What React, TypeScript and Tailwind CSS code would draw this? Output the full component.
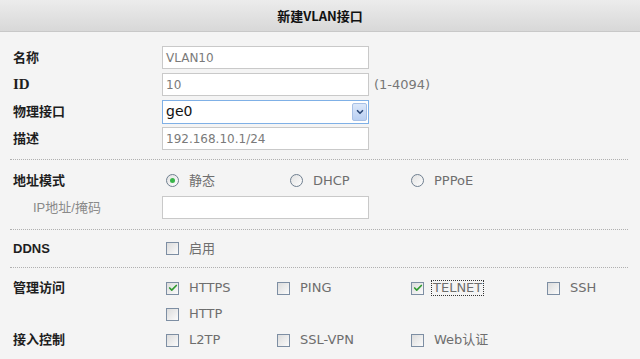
import { Check, ChevronDown } from 'lucide-react';

const font = { fontFamily: '"DejaVu Sans", "Noto Sans CJK SC", sans-serif' };

function Label({ children, sub, serif }: { children: React.ReactNode; sub?: boolean; serif?: boolean }) {
  return (
    <div
      className={
        sub
          ? 'w-[152px] shrink-0 pl-[23px] text-[13px] text-[#8a8a8a]'
          : serif
            ? 'w-[152px] shrink-0 pl-[3px] text-[15px] font-bold text-[#1e1e1e]'
            : 'w-[152px] shrink-0 pl-[3px] text-[13px] font-bold text-[#1e1e1e]'
      }
      style={{
        fontFamily: serif
          ? '"Liberation Serif", serif'
          : '"Liberation Sans", "Noto Sans CJK SC", sans-serif',
      }}
    >
      {children}
    </div>
  );
}

function TextBox({ value }: { value?: string }) {
  return (
    <div className="w-[207px] h-[23px] bg-white border border-[#c9c9c9] px-[3px] flex items-center text-[12px] text-[#7a7a7a]">
      {value}
    </div>
  );
}

function Checkbox({ checked }: { checked?: boolean }) {
  return (
    <span className="w-[13px] h-[13px] shrink-0 border border-[#7d8ea3] bg-gradient-to-br from-[#dcdcdc] to-[#fbfbfb] flex items-center justify-center">
      {checked && <Check className="w-[10px] h-[10px] text-[#2f9a2f]" strokeWidth={4} />}
    </span>
  );
}

function Radio({ checked }: { checked?: boolean }) {
  return (
    <span className="w-[13px] h-[13px] shrink-0 rounded-full border border-[#6f7f90] bg-gradient-to-br from-[#e2e2e2] to-[#fdfdfd] flex items-center justify-center">
      {checked && <span className="w-[5px] h-[5px] rounded-full bg-[#39b54a]" />}
    </span>
  );
}

function Opt({ w, children }: { w: string; children: React.ReactNode }) {
  return (
    <div className={`${w} flex items-center gap-[10px] text-[13px] text-[#6e6e6e]`}>
      {children}
    </div>
  );
}

const Row = ({ h = 'h-[27px]', children }: { h?: string; children: React.ReactNode }) => (
  <div className={`${h} flex items-center`}>{children}</div>
);

export default function App() {
  return (
    <div className="w-[640px] h-[359px] bg-[#f4f4f4] overflow-hidden" style={font}>
      <div className="h-[32px] bg-gradient-to-b from-[#ececec] to-[#d8d8d8] border-b border-[#c8c8c8] flex items-center justify-center">
        <span
          className="text-[13px] font-bold text-[#111]"
          style={{ fontFamily: '"Noto Sans CJK SC", sans-serif' }}
        >
          新建VLAN接口
        </span>
      </div>

      <div className="px-[10px] pt-[12px] pr-[12px]">
        <div className="pb-[7px] border-b border-dotted border-[#b0b0b0]">
          <Row>
            <Label>名称</Label>
            <TextBox value="VLAN10" />
          </Row>
          <Row>
            <Label serif>ID</Label>
            <TextBox value="10" />
            <span className="ml-[5px] text-[13px] text-[#777]">(1-4094)</span>
          </Row>
          <Row>
            <Label>物理接口</Label>
            <div className="w-[207px] h-[24px] bg-white border border-[#7fb0e6] pl-[3px] pr-[1px] flex items-center justify-between text-[14px] text-[#111]">
              <span>ge0</span>
              <span className="w-[15px] h-[18px] rounded-[2px] border border-[#a7c0e6] bg-gradient-to-b from-[#dce8fa] to-[#b9cff2] flex items-center justify-center">
                <ChevronDown className="w-[10px] h-[10px] text-[#2d4a7a]" strokeWidth={4} />
              </span>
            </div>
          </Row>
          <Row>
            <Label>描述</Label>
            <TextBox value="192.168.10.1/24" />
          </Row>
        </div>

        <div className="pt-[7px] pb-[8px] border-b border-dotted border-[#b0b0b0]">
          <Row>
            <Label>地址模式</Label>
            <div className="ml-[4px] flex items-center">
              <Opt w="w-[124px]"><Radio checked />静态</Opt>
              <Opt w="w-[121px]"><Radio />DHCP</Opt>
              <Opt w="w-[120px]"><Radio />PPPoE</Opt>
            </div>
          </Row>
          <Row>
            <Label sub>IP地址/掩码</Label>
            <TextBox />
          </Row>
        </div>

        <div className="pt-[5px] pb-[5px] border-b border-dotted border-[#b0b0b0]">
          <Row>
            <Label>DDNS</Label>
            <div className="ml-[4px] flex items-center">
              <Opt w="w-[120px]"><Checkbox />启用</Opt>
            </div>
          </Row>
        </div>

        <div className="pt-[7px]">
          <Row h="h-[26px]">
            <Label>管理访问</Label>
            <div className="ml-[4px] flex items-center">
              <Opt w="w-[111px]"><Checkbox checked />HTTPS</Opt>
              <Opt w="w-[134px]"><Checkbox />PING</Opt>
              <Opt w="w-[136px]">
                <Checkbox checked />
                <span className="-ml-[3px] px-[1px] border border-dotted border-[#333] leading-[14px]">TELNET</span>
              </Opt>
              <Opt w="w-[80px]"><Checkbox />SSH</Opt>
            </div>
          </Row>
          <Row h="h-[26px]">
            <Label>{''}</Label>
            <div className="ml-[4px] flex items-center">
              <Opt w="w-[111px]"><Checkbox />HTTP</Opt>
            </div>
          </Row>
          <Row h="h-[26px]">
            <Label>接入控制</Label>
            <div className="ml-[4px] flex items-center">
              <Opt w="w-[111px]"><Checkbox />L2TP</Opt>
              <Opt w="w-[134px]"><Checkbox />SSL-VPN</Opt>
              <Opt w="w-[136px]"><Checkbox />Web认证</Opt>
            </div>
          </Row>
        </div>
      </div>
    </div>
  );
}
